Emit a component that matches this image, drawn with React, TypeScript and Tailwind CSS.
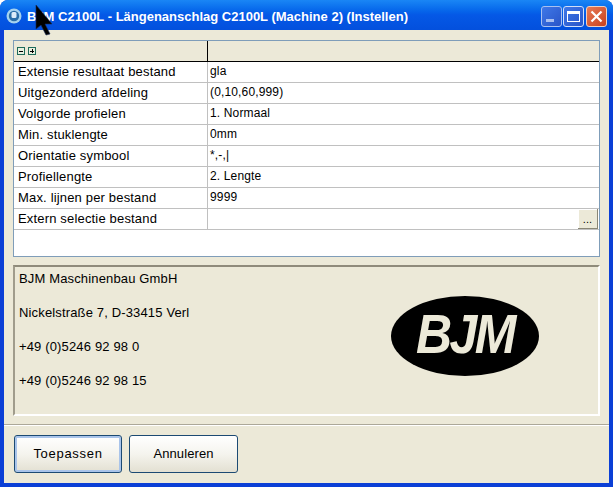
const font = { fontFamily: '"Liberation Sans", Arial, sans-serif' };

const rows: [string, string][] = [
  ["Extensie resultaat bestand", "gla"],
  ["Uitgezonderd afdeling", "(0,10,60,999)"],
  ["Volgorde profielen", "1. Normaal"],
  ["Min. stuklengte", "0mm"],
  ["Orientatie symbool", "*,-,|"],
  ["Profiellengte", "2. Lengte"],
  ["Max. lijnen per bestand", "9999"],
  ["Extern selectie bestand", ""],
];

function Btn({ label, focus }: { label: string; focus?: boolean }) {
  return (
    <button
      className={
        "h-[38px] rounded-[3px] border border-[#1c4a73] bg-gradient-to-b from-white via-[#f5f4ee] to-[#e3e0d2] text-[13px] text-black " +
        (focus ? "w-[108px] tracking-[0.7px] shadow-[inset_0_0_0_2px_#a9c4ea]" : "ml-[7px] w-[109px] tracking-[0.1px]")
      }
    >
      {label}
    </button>
  );
}

export default function App() {
  return (
    <div
      className="relative flex h-[487px] w-[613px] flex-col overflow-hidden rounded-t-[8px] bg-[#0b3fd6] text-black"
      style={font}
    >
      {/* title bar */}
      <div className="flex h-[30px] shrink-0 items-center bg-gradient-to-b from-[#1a86f5] via-[#0558e6] to-[#0350dd] pt-[2px] pr-[6px] pl-[6px]">
        <svg width="16" height="16" viewBox="0 0 16 16" className="shrink-0">
          <circle cx="8" cy="8" r="7.5" fill="#a5d2ee" />
          <circle cx="8" cy="8" r="5.2" fill="#2a6ea8" />
          <rect x="5.5" y="4" width="5" height="6" rx="1.5" fill="#dcecf8" />
        </svg>
        <span className="ml-[5px] pt-[1px] text-[13px] font-bold whitespace-nowrap text-white">
          BJM C2100L - Längenanschlag C2100L (Machine 2) (Instellen)
        </span>
        <div className="ml-auto flex gap-[1px]">
          <div className="flex h-[21px] w-[21px] items-end rounded-[3px] border border-[#a8c0f0] bg-gradient-to-br from-[#3f78e8] to-[#2a55c8] pb-[4px] pl-[4px]">
            <div className="h-[3px] w-[8px] bg-[#a9bff0]" />
          </div>
          <div className="flex h-[21px] w-[21px] items-center justify-center rounded-[3px] border border-[#d0def8] bg-gradient-to-br from-[#3f78e8] to-[#2a55c8]">
            <div className="h-[11px] w-[13px] border border-t-[3px] border-white" />
          </div>
          <div className="ml-[1px] flex h-[21px] w-[21px] items-center justify-center rounded-[3px] border border-[#f0d0c0] bg-gradient-to-br from-[#e87a55] to-[#c8401c]">
            <svg width="13" height="13" viewBox="0 0 13 13">
              <path d="M1.5 1.5 L11.5 11.5 M11.5 1.5 L1.5 11.5" stroke="#fff" strokeWidth="2.2" />
            </svg>
          </div>
        </div>
      </div>

      {/* client */}
      <div className="mx-[4px] mb-[4px] flex flex-1 flex-col bg-[#ece9d8] pt-[10px]">
        <div className="mx-[9px] h-[217px] shrink-0 border border-[#7f9db9] bg-white">
          <div className="flex h-[21px] border-b border-black bg-[#ece9d8]">
            <div className="flex w-[194px] items-center gap-[3px] border-r border-black pl-[3px]">
              <div className="flex h-[8px] w-[8px] items-center justify-center border border-[#1d6b5a] bg-[#e8f0e0]">
                <div className="h-[1px] w-[4px] bg-black" />
              </div>
              <div className="relative flex h-[8px] w-[8px] items-center justify-center border border-[#1d6b5a] bg-[#e8f0e0]">
                <div className="h-[1px] w-[4px] bg-black" />
                <div className="absolute h-[4px] w-[1px] bg-black" />
              </div>
            </div>
          </div>
          {rows.map(([k, v], i) => (
            <div key={k} className="flex h-[21px] border-b border-[#c0c0c0] text-[13px] tracking-[0.17px]">
              <div className="flex w-[194px] items-center border-r border-[#c0c0c0] pb-[1px] pl-[4px]">{k}</div>
              <div className="flex flex-1 items-center justify-between pl-[2px]">
                <span className="pb-[2px] text-[12px] tracking-[0.15px]">{v}</span>
                {i === 7 && (
                  <div className="mr-[1px] flex h-[20px] w-[20px] items-end justify-center border-r border-b border-[#8a8776] bg-[#ece9d8] pb-[3px] text-[11px] leading-none shadow-[inset_1px_1px_0_#fff]">
                    ...
                  </div>
                )}
              </div>
            </div>
          ))}
        </div>

        <div className="mx-[9px] mt-[8px] flex h-[151px] shrink-0 items-start justify-between border-2 border-t-[#8f8b7b] border-r-white border-b-white border-l-[#a09c8c] pr-[59px] pl-[4px]">
          <div className="flex h-full flex-col gap-[16px] pt-[3px] text-[13px] leading-[18px] tracking-[0.15px]">
            <div>BJM Maschinenbau GmbH</div>
            <div>Nickelstraße 7, D-33415 Verl</div>
            <div>+49 (0)5246 92 98 0</div>
            <div>+49 (0)5246 92 98 15</div>
          </div>
          <div className="mt-[29px] flex h-[80px] w-[148px] items-center justify-center rounded-[50%] bg-black pb-[4px]">
            <span className="scale-y-[1.12] text-[50px] leading-none font-bold tracking-[-2.5px] text-[#ece9d8] italic">BJM</span>
          </div>
        </div>

        <div className="mt-[8px] h-[2px] shrink-0 border-t border-b border-t-[#aca899] border-b-white" />

        <div className="flex pt-[9px] pl-[10px]">
          <Btn label="Toepassen" focus />
          <Btn label="Annuleren" />
        </div>
      </div>

      {/* mouse cursor */}
      <svg width="20" height="32" viewBox="0 0 20 32" className="absolute top-[5px] left-[35px]">
        <path d="M1 0 L1 24 L6 20 L11 30 L15 29 L10 19 L17 19 Z" fill="#000" stroke="#1a2a55" strokeWidth="0.6" />
      </svg>
    </div>
  );
}
